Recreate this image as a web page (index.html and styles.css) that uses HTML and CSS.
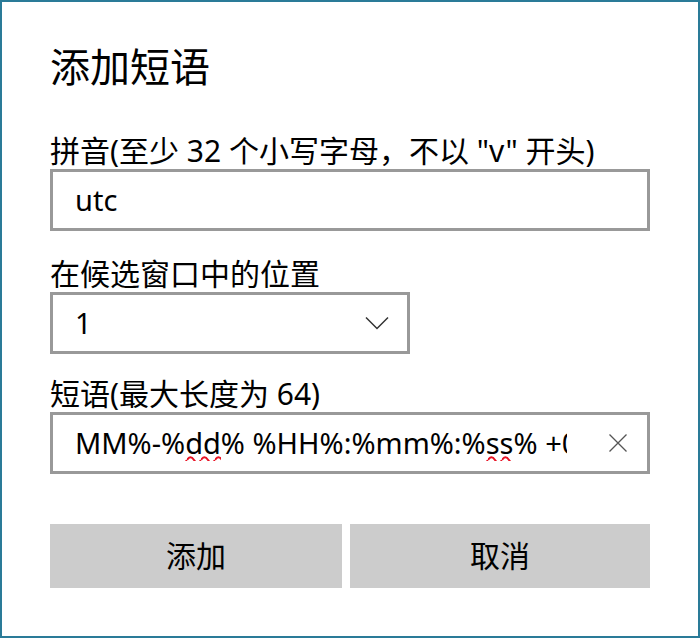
FILE: index.html
```html
<!DOCTYPE html>
<html lang="zh-CN">
<head>
<meta charset="utf-8">
<title>添加短语</title>
<link rel="stylesheet" href="styles.css">
</head>
<body>
<div class="dialog">
  <h1 class="title">添加短语</h1>

  <div class="field field-first">
    <div class="label">拼音(至少 32 个小写字母，不以 "v" 开头)</div>
    <div class="box box-wide">
      <span class="value">utc</span>
    </div>
  </div>

  <div class="field field-second">
    <div class="label">在候选窗口中的位置</div>
    <div class="box box-select">
      <span class="value">1</span>
      <svg class="chevron" width="24" height="14" viewBox="0 0 24 14" aria-hidden="true">
        <polyline points="1,1.5 12,12.5 23,1.5" fill="none" stroke="#333" stroke-width="1.5"/>
      </svg>
    </div>
  </div>

  <div class="field field-third">
    <div class="label">短语(最大长度为 64)</div>
    <div class="box box-wide box-phrase">
      <div class="clip"><span class="value">MM%-%<span class="spell">dd</span>% %HH%:%mm%:%<span class="spell">ss</span>% +08:00</span></div>
      <svg class="clear" width="20" height="20" viewBox="0 0 20 20" aria-hidden="true">
        <path d="M1.5 1.5 L18.5 18.5 M18.5 1.5 L1.5 18.5" fill="none" stroke="#555" stroke-width="1.3"/>
      </svg>
    </div>
  </div>

  <div class="buttons">
    <button class="btn btn-add" type="button">添加</button>
    <button class="btn btn-cancel" type="button">取消</button>
  </div>
</div>
</body>
</html>
```

FILE: styles.css
```css
html, body {
  margin: 0;
  padding: 0;
  background: #ffffff;
}

body {
  font-family: "Noto Sans", "Noto Sans CJK SC", sans-serif;
  color: #000;
}

.dialog {
  box-sizing: border-box;
  width: 700px;
  height: 638px;
  border: 2px solid #2a7b98;
  padding: 0 48px;
  background: #fff;
}

.title {
  margin: 37px 0 0;
  font-size: 40px;
  line-height: 56px;
  font-weight: normal;
}

.field-first { margin-top: 38px; }
.field-second { margin-top: 25px; }
.field-third { margin-top: 22px; }

.label {
  font-size: 30px;
  line-height: 36px;
  white-space: nowrap;
}

.box {
  box-sizing: border-box;
  height: 62px;
  border: 3px solid #999999;
  display: flex;
  align-items: center;
  padding-left: 22px;
  font-size: 29px;
  line-height: 36px;
  background: #fff;
}

.box-wide { width: 600px; }

.box-select {
  width: 360px;
  padding-right: 18px;
  justify-content: space-between;
}

.box-phrase {
  padding-right: 19px;
  gap: 41px;
}

.clip {
  flex: 1;
  overflow: hidden;
  white-space: nowrap;
}

.spell {
  padding-bottom: 2px;
  background-image: url("data:image/svg+xml,%3Csvg xmlns='http://www.w3.org/2000/svg' width='14' height='8'%3E%3Cpath d='M0 4 Q3.5 -1.5 7 4 T14 4' fill='none' stroke='%23e81123' stroke-width='2'/%3E%3C/svg%3E");
  background-repeat: repeat-x;
  background-position: 2px 100%;
  background-size: 14px 8px;
}

.chevron, .clear { flex: none; display: block; }

.buttons {
  margin-top: 50px;
  display: grid;
  grid-template-columns: 292px 300px;
  gap: 8px;
}

.btn {
  height: 64px;
  border: none;
  margin: 0;
  padding: 0;
  background: #cccccc;
  font-family: "Noto Sans", "Noto Sans CJK SC", sans-serif;
  font-size: 30px;
  line-height: 36px;
  color: #000;
}
```
